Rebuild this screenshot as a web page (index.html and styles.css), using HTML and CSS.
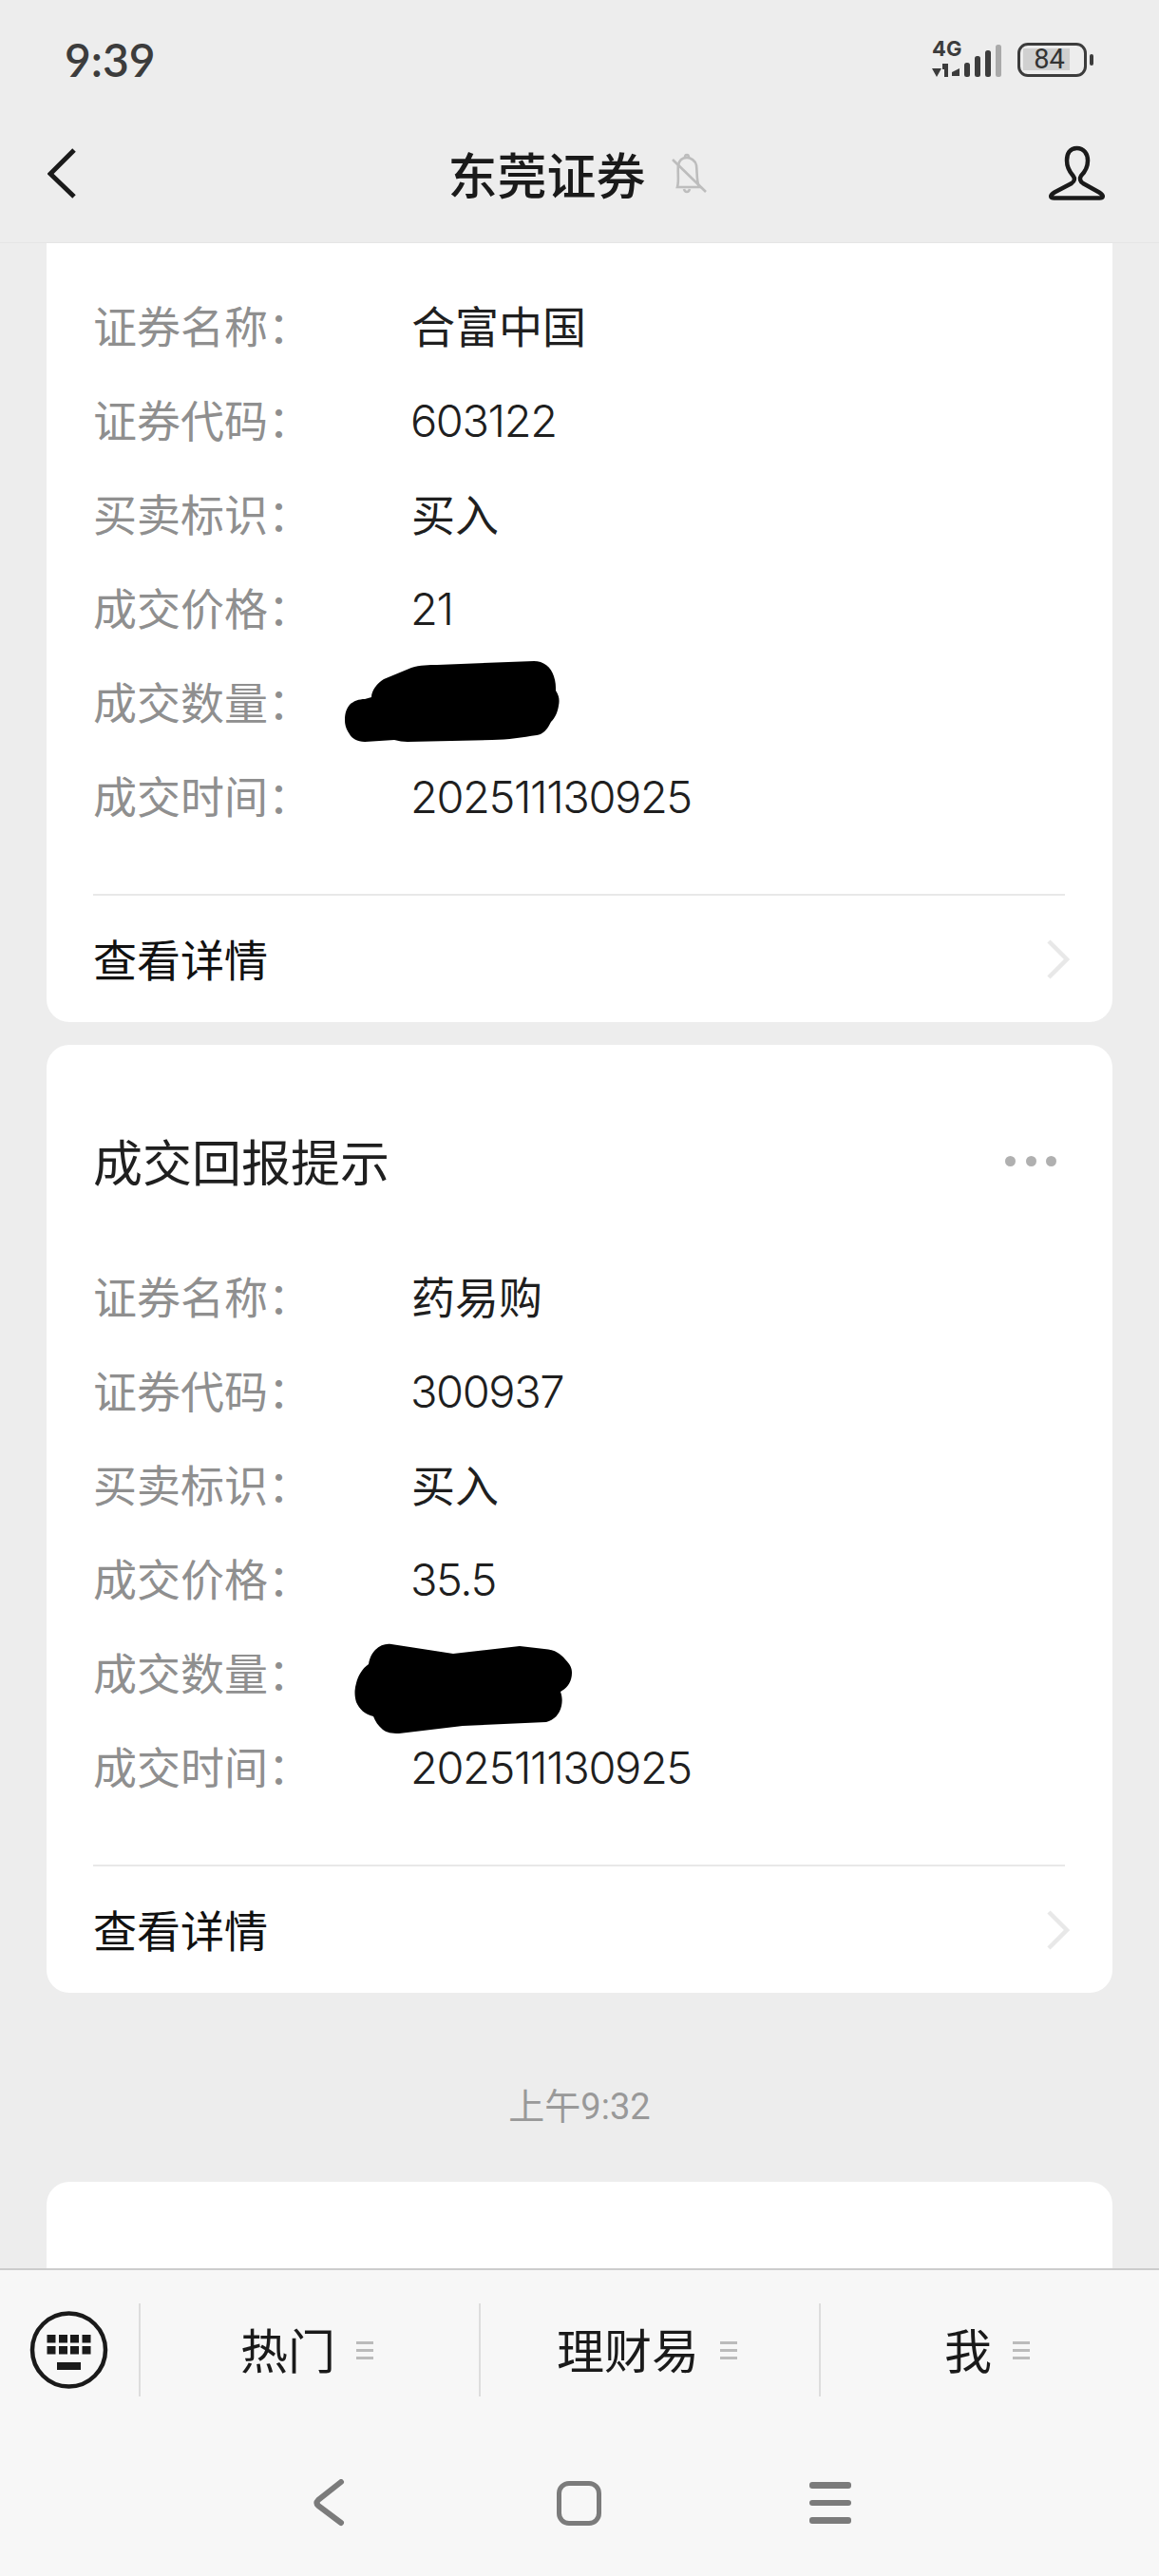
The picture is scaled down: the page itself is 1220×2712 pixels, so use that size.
FILE: index.html
```html
<html>
<head>
    <meta charset="utf-8">
    <title>东莞证券</title>
    <link rel="stylesheet" href="styles.css">
</head>

<body>
    <div class="page">
        <div class="status">
            <span class="clock">9:39</span>
            <div class="status-right">
                <span class="net">4G</span>
                <svg class="signal" width="75" height="36" viewBox="980 46 75 36">
                    <path d="M981 72h10l-5 9zM992 67h6v14h-4v-8h-2zM1002 80v-4l8-4v8z" fill="#3c3c3c"/>
                    <rect x="1015" y="66" width="6" height="15" rx="2.5" fill="#3c3c3c"/>
                    <rect x="1026" y="59" width="6" height="22" rx="2.5" fill="#3c3c3c"/>
                    <rect x="1037" y="53" width="6" height="28" rx="2.5" fill="#3c3c3c"/>
                    <rect x="1048" y="47" width="6" height="34" rx="2.5" fill="#aaaaaa"/>
                </svg>
                <div class="battery"><span class="level">84</span></div>
                <div class="battery-tip"></div>
            </div>
        </div>

        <div class="topbar">
            <svg class="back" width="30" height="54" viewBox="50 156 30 54">
                <path d="M78 158L53 183L78 207" fill="none" stroke="#1a1a1a" stroke-width="5"/>
            </svg>
            <div class="title">
                <span>东莞证券</span>
                <svg width="40" height="44" viewBox="705 160 40 44" fill="none" stroke="#bdbdbd" stroke-width="2.6">
                    <path d="M713 196C715 190 713 178 714 173C715 167 719 165 723 165C727 165 732 168 733 173C734 180 733 190 736 196Z"/>
                    <path d="M721 165C721 161 725 161 725 165M720 198C721 202 725 202 726 198"/>
                    <path d="M708 167L743 201"/>
                </svg>
            </div>
            <svg class="person" width="64" height="60" viewBox="1102 154 64 60">
                <path d="M1134.5 157C1127 157 1124 163 1124 170C1124 177 1127 182 1130.5 186C1133 189 1132 192 1129 194L1111 203.5C1106 206.5 1106 209.5 1110.5 209.5L1158.5 209.5C1163 209.5 1163 206.5 1158 203.5L1141 194C1138 192 1137 189 1139 186C1143 182 1146 177 1146 170C1146 163 1142 157 1134.5 157Z" fill="none" stroke="#1a1a1a" stroke-width="4.5"/>
            </svg>
        </div>

        <div class="chat">
            <div class="card card-cut">
                <div class="row"><span class="label">证券名称：</span><span class="value">合富中国</span></div>
                <div class="row"><span class="label">证券代码：</span><span class="value num">603122</span></div>
                <div class="row"><span class="label">买卖标识：</span><span class="value">买入</span></div>
                <div class="row"><span class="label">成交价格：</span><span class="value num">21</span></div>
                <div class="row">
                    <span class="label">成交数量：</span>
                    <!-- scribbled out in the screenshot -->
                    <svg class="blot blot-one" width="230" height="90" viewBox="360 694 230 90">
                        <path d="M384 736L391 734C391 727 397 719 404 715L433 703C442 700 452 700 460 700L562 696C572 696 580 702 583 712C585 718 585 722 585 727C589 733 589 738 588 743C587 750 584 756 580 760C576 768 572 773 565 774C550 776 535 779 518 779L429 781C424 781 420 780 415 779L384 781C376 781 370 777 368 773C364 767 363 763 363 758C363 750 365 746 368 742C372 738 378 736 384 736Z"/>
                    </svg>
                </div>
                <div class="row"><span class="label">成交时间：</span><span class="value num">202511130925</span></div>
                <div class="more">
                    <span>查看详情</span>
                    <svg width="26" height="44" viewBox="0 0 26 44"><path d="M3 3L22 22L3 41" fill="none" stroke="#e8e8e8" stroke-width="4.5"/></svg>
                </div>
            </div>

            <div class="card">
                <div class="card-head">
                    <span class="card-title">成交回报提示</span>
                    <div class="dots"><i></i><i></i><i></i></div>
                </div>
                <div class="row"><span class="label">证券名称：</span><span class="value">药易购</span></div>
                <div class="row"><span class="label">证券代码：</span><span class="value num">300937</span></div>
                <div class="row"><span class="label">买卖标识：</span><span class="value">买入</span></div>
                <div class="row"><span class="label">成交价格：</span><span class="value num">35.5</span></div>
                <div class="row">
                    <span class="label">成交数量：</span>
                    <svg class="blot blot-two" width="232" height="98" viewBox="372 1730 232 98">
                        <path d="M412 1732L477 1742L547 1734L573 1737C585 1738 590 1742 595 1748C601 1754 602 1758 602 1762C602 1772 597 1778 590 1782C592 1788 592 1792 591 1797C589 1806 583 1812 575 1814L487 1818L420 1826C412 1826 407 1825 403 1822C398 1818 395 1813 393 1808C384 1806 378 1800 375 1793C373 1786 373 1780 375 1773C377 1765 381 1758 388 1753C389 1746 392 1741 395 1738C400 1733 406 1731 412 1732Z"/>
                    </svg>
                </div>
                <div class="row"><span class="label">成交时间：</span><span class="value num">202511130925</span></div>
                <div class="more">
                    <span>查看详情</span>
                    <svg width="26" height="44" viewBox="0 0 26 44"><path d="M3 3L22 22L3 41" fill="none" stroke="#e8e8e8" stroke-width="4.5"/></svg>
                </div>
            </div>

            <div class="stamp">上午9:32</div>

            <div class="card card-next"></div>
        </div>

        <div class="bottom">
            <div class="tabs">
                <div class="keyboard">
                    <svg width="84" height="84" viewBox="32 2432 84 84">
                        <circle cx="73.5" cy="2474" r="38.5" fill="none" stroke="#1a1a1a" stroke-width="4.5"/>
                        <g fill="#1a1a1a">
                            <rect x="50.5" y="2458" width="9" height="8.5"/>
                            <rect x="63" y="2458" width="9" height="8.5"/>
                            <rect x="75" y="2458" width="9" height="8.5"/>
                            <rect x="87.5" y="2458" width="9" height="8.5"/>
                            <rect x="50.5" y="2470" width="9" height="8.5"/>
                            <rect x="63" y="2470" width="9" height="8.5"/>
                            <rect x="75" y="2470" width="9" height="8.5"/>
                            <rect x="87.5" y="2470" width="9" height="8.5"/>
                            <rect x="61" y="2487" width="25" height="8"/>
                        </g>
                    </svg>
                </div>
                <div class="tab"><span>热门</span><div class="lines"><i></i><i></i><i></i></div></div>
                <div class="tab"><span>理财易</span><div class="lines"><i></i><i></i><i></i></div></div>
                <div class="tab"><span>我</span><div class="lines"><i></i><i></i><i></i></div></div>
            </div>
            <div class="navkeys">
                <svg width="34" height="50" viewBox="329 2611 34 50">
                    <path d="M359 2614L335 2633Q332 2636 335 2639L359 2657" fill="none" stroke="#7b7b7b" stroke-width="6" stroke-linecap="round"/>
                </svg>
                <div class="nav-home"></div>
                <div class="nav-menu"><i></i><i></i><i></i></div>
            </div>
        </div>
    </div>
</body>
</html>
```

FILE: styles.css
```css
html, body {
    margin: 0;
    padding: 0;
}

body {
    font-family: "Roboto", "Noto Sans CJK SC", sans-serif;
    background: #ededed;
    color: #1f1f1f;
}

.page {
    width: 1220px;
    height: 2712px;
    display: flex;
    flex-direction: column;
    overflow: hidden;
}

/* status bar */
.status {
    height: 100px;
    flex: none;
    box-sizing: border-box;
    display: flex;
    align-items: flex-start;
    justify-content: space-between;
    padding: 43px 69px 0 68px;
}

.clock {
    font-family: "Lato", sans-serif;
    font-size: 48px;
    font-weight: 600;
    line-height: 40px;
    color: #3c3c3c;
}

.status-right {
    display: flex;
    align-items: flex-start;
    position: relative;
    margin-top: 2px;
}

.net {
    position: absolute;
    left: 1px;
    top: -4px;
    font-family: "Inter", sans-serif;
    font-size: 22px;
    font-weight: 700;
    line-height: 20px;
    color: #3c3c3c;
}

.signal {
    display: block;
    margin-top: 1px;
}

.battery {
    width: 73px;
    height: 36px;
    box-sizing: border-box;
    margin-left: 16px;
    border: 3.5px solid #3c3c3c;
    border-radius: 11px;
    padding: 3px;
}

.level {
    display: block;
    width: 49px;
    height: 23px;
    box-sizing: border-box;
    padding-left: 6px;
    background: #d0d0d0;
    font-size: 29px;
    line-height: 23px;
    text-align: center;
    color: #333333;
}

.battery-tip {
    width: 4px;
    height: 12px;
    margin: 12px 0 0 3px;
    background: #3c3c3c;
    border-radius: 2px;
}

/* title bar */
.topbar {
    height: 156px;
    flex: none;
    box-sizing: border-box;
    border-bottom: 1px solid #e5e5e5;
    display: flex;
    align-items: center;
    justify-content: space-between;
    padding: 10px 55px 0 50px;
}

.title {
    display: flex;
    align-items: center;
    gap: 25px;
    font-size: 52px;
    font-weight: 500;
    color: #1a1a1a;
    margin-left: 35px;
}

/* message list */
.chat {
    flex: 1;
    min-height: 0;
    overflow: hidden;
    padding: 0 49px;
}

.card {
    background: #ffffff;
    border-radius: 24px;
    padding: 0 50px 0 49px;
}

.card + .card {
    margin-top: 24px;
}

.card-cut {
    border-radius: 0 0 24px 24px;
    padding-top: 37px;
}

.card-next {
    height: 200px;
}

.card-head {
    height: 188px;
    padding-top: 27px;
    display: flex;
    align-items: center;
    justify-content: space-between;
}

.card-title {
    font-size: 52px;
    color: #1f1f1f;
}

.dots {
    display: flex;
    gap: 10.5px;
    margin: 2px 9px 0 0;
}

.dots i {
    width: 11px;
    height: 11px;
    border-radius: 50%;
    background: #b0b0b0;
}

.row {
    height: 99px;
    box-sizing: border-box;
    padding-bottom: 4px;
    display: flex;
    align-items: center;
    position: relative;
    font-size: 46px;
}

.label {
    width: 335px;
    color: #8f8f8f;
    flex: none;
}

.value {
    color: #1f1f1f;
    font-size: 46px;
}

/* digits in the reference are taller and narrower than plain Roboto */
.num {
    font-family: "Inter", sans-serif;
    font-size: 47px;
    font-weight: 300;
    letter-spacing: -1.4px;
    margin: 6px 0 0 -1px;
}

.blot {
    position: absolute;
    fill: #000000;
}

.blot-one {
    left: 262px;
    top: 5px;
}

.blot-two {
    left: 274px;
    top: 18px;
}

.more {
    margin-top: 54px;
    height: 135px;
    box-sizing: border-box;
    border-top: 2px solid #e8e8e8;
    padding-bottom: 4px;
    display: flex;
    align-items: center;
    justify-content: space-between;
    font-size: 46px;
    color: #111111;
}

.more svg {
    margin: 4px -6px 0 0;
}

.stamp {
    text-align: center;
    font-size: 38px;
    line-height: 44px;
    color: #999999;
    margin: 98px 0 57px;
}

/* bottom bar */
.bottom {
    height: 324px;
    flex: none;
    box-sizing: border-box;
    background: #f7f7f7;
    border-top: 2px solid #cccccc;
}

.tabs {
    height: 160px;
    padding-top: 35px;
    box-sizing: border-box;
    display: flex;
}

.keyboard {
    width: 146px;
    height: 98px;
    flex: none;
    display: flex;
    align-items: center;
    justify-content: center;
}

.tab {
    width: 358px;
    height: 98px;
    box-sizing: border-box;
    border-left: 2px solid #dddddd;
    display: flex;
    align-items: center;
    justify-content: center;
    gap: 22px;
    font-size: 50px;
    color: #1a1a1a;
    padding: 0 6px 4px 0;
}

.lines {
    width: 18px;
    display: flex;
    flex-direction: column;
    gap: 5px;
    margin-top: 4px;
}

.lines i {
    height: 3px;
    background: #bbbbbb;
}

/* phone navigation keys */
.navkeys {
    display: flex;
    align-items: center;
    padding: 60px 0 0 329px;
}

.nav-home {
    width: 47px;
    height: 47px;
    box-sizing: border-box;
    margin-left: 223px;
    border: 5.5px solid #7b7b7b;
    border-radius: 13px;
}

.nav-menu {
    width: 44px;
    margin-left: 219px;
    display: flex;
    flex-direction: column;
    gap: 12px;
}

.nav-menu i {
    height: 6.5px;
    border-radius: 3px;
    background: #7b7b7b;
}
```
